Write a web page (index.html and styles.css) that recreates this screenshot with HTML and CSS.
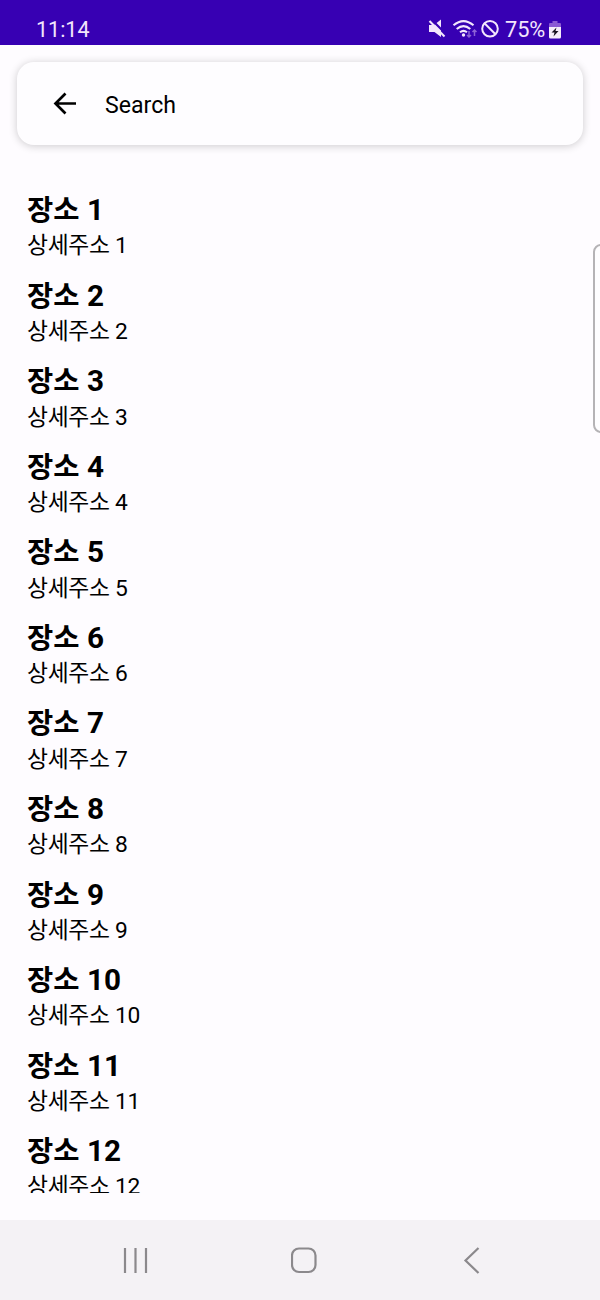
FILE: index.html
```html
<!DOCTYPE html>
<html lang="ko">
<head>
<meta charset="utf-8">
<title>Search</title>
<link rel="stylesheet" href="styles.css">
</head>
<body>
<div class="screen">
  <header class="status">
    <span class="time">11:14</span>
    <svg class="status-icons" viewBox="0 0 76 24" fill="none" stroke="#f3e6fc">
      <path d="M2 8h5l7-5.500v17.500L7.500 15H2z" fill="#f3e6fc" stroke="none"/>
      <path d="M4.500 2.500l15 15" stroke="#3700b3" stroke-width="2.200"/>
      <path d="M2.500 4l15 15.500" stroke-width="2"/>
      <path d="M26.500 8.300q10-8.500 20 0M29.700 12q6.800-5.800 13.600 0M33 15.300q3.500-2.800 7 0" stroke-width="2.100"/>
      <circle cx="36.500" cy="18" r="1.700" fill="#f3e6fc" stroke="none"/>
      <path d="M42 14v6m-2-2l2 2 2-2M47.500 19v-6m-2 2l2-2 2 2" stroke="#8c62d5" stroke-width="1.500"/>
      <circle cx="63" cy="11.700" r="7.800" stroke-width="2"/>
      <path d="M57.500 6.200l11 11" stroke-width="2"/>
    </svg>
    <span class="percent">75%</span>
    <svg class="battery" viewBox="0 0 12 18">
      <path d="M3.500 0h5v2H11q1 0 1 1v4H0V3q0-1 1-1h2.500z" fill="#8a58d4"/>
      <path d="M0 6h12v10q0 1.500-1.500 1.500h-9Q0 17.500 0 16z" fill="#f5ecfa"/>
      <path d="M7.500 6.500L2.500 11.500h3L4.500 15.500l5-5.500h-3z" fill="#17101f"/>
    </svg>
  </header>
  <div class="search">
    <svg class="back" viewBox="0 0 24 24" fill="none" stroke="#000" stroke-width="2.700"><path d="M23 11.500H2.500M12.500 1.500L2.500 11.500l10 10"/></svg>
    <span class="search-text">Search</span>
  </div>
  <ul class="places">
    <li class="place"><b class="name">장소 <span class="number">1</span></b><span class="address">상세주소 1</span></li>
    <li class="place"><b class="name">장소 <span class="number">2</span></b><span class="address">상세주소 2</span></li>
    <li class="place"><b class="name">장소 <span class="number">3</span></b><span class="address">상세주소 3</span></li>
    <li class="place"><b class="name">장소 <span class="number">4</span></b><span class="address">상세주소 4</span></li>
    <li class="place"><b class="name">장소 <span class="number">5</span></b><span class="address">상세주소 5</span></li>
    <li class="place"><b class="name">장소 <span class="number">6</span></b><span class="address">상세주소 6</span></li>
    <li class="place"><b class="name">장소 <span class="number">7</span></b><span class="address">상세주소 7</span></li>
    <li class="place"><b class="name">장소 <span class="number">8</span></b><span class="address">상세주소 8</span></li>
    <li class="place"><b class="name">장소 <span class="number">9</span></b><span class="address">상세주소 9</span></li>
    <li class="place"><b class="name">장소 <span class="number">10</span></b><span class="address">상세주소 10</span></li>
    <li class="place"><b class="name">장소 <span class="number">11</span></b><span class="address">상세주소 11</span></li>
    <li class="place"><b class="name">장소 <span class="number">12</span></b><span class="address">상세주소 12</span></li>
  </ul>
  <nav class="navbar">
    <svg class="nav-icon" viewBox="0 0 28 28"><path d="M3 2v25M13.500 2v25M24 2v25"/></svg>
    <svg class="nav-icon" viewBox="0 0 28 28"><rect x="1" y="2.500" width="23.500" height="23.500" rx="7"/></svg>
    <svg class="nav-icon" viewBox="0 0 28 28"><path d="M19.500 2L6.500 14.500l13 12.500"/></svg>
  </nav>
  <div class="edge-panel"></div>
</div>
</body>
</html>
```
FILE: styles.css
```css
body {
  margin: 0;
  font-family: Roboto, "Noto Sans CJK KR", sans-serif;
  color: #000;
}

.screen {
  position: relative;
  display: flex;
  flex-direction: column;
  width: 600px;
  height: 1300px;
  overflow: hidden;
  background: #fefcff;
}

.status {
  display: flex;
  align-items: flex-start;
  flex: none;
  box-sizing: border-box;
  height: 45px;
  padding: 17px 39px 0 36px;
  background: #3700b3;
  color: #f3e6fc;
  line-height: 26px;
}

.time {
  flex: 1;
  font-size: 21.5px;
}

.status-icons {
  width: 76px;
  height: 24px;
  margin-right: 2px;
}

.percent {
  width: 44px;
  font-size: 21.8px;
  letter-spacing: -0.1px;
}

.battery {
  width: 12px;
  height: 18px;
  margin-top: 4px;
}

.search {
  display: flex;
  align-items: center;
  flex: none;
  height: 83px;
  margin: 17px 17px 0;
  border-radius: 17px;
  background: #fefdff;
  box-shadow: 0 1px 9px rgba(0, 0, 0, 0.2);
}

.back {
  width: 24px;
  height: 24px;
  margin-left: 36px;
}

.search-text {
  margin-left: 28px;
  padding-top: 3px;
  font-size: 23.1px;
}

.places {
  flex: none;
  height: 1001px;
  margin: 47.4px 0 0;
  padding: 0 0 0 27px;
  overflow: hidden;
  list-style: none;
}

.place {
  display: flex;
  flex-direction: column;
  height: 85.53px;
}

.name {
  height: 37px;
  font-size: 28.5px;
  line-height: 37px;
}

.number {
  margin-left: 0.5px;
  font-size: 29.7px;
  line-height: 1;
}

.address {
  margin-top: 0.1px;
  font-size: 22.8px;
  line-height: 33px;
  letter-spacing: -0.3px;
}

.navbar {
  display: flex;
  justify-content: space-between;
  align-items: center;
  box-sizing: border-box;
  height: 80px;
  margin-top: auto;
  padding: 0 113px 0 122px;
  background: #f4f2f5;
}

.nav-icon {
  width: 28px;
  height: 28px;
  fill: none;
  stroke: #8b898c;
  stroke-width: 2.2;
}

/* Handle floating over the right edge of the list */
.edge-panel {
  position: absolute;
  top: 244px;
  right: -12px;
  box-sizing: border-box;
  width: 19px;
  height: 189px;
  border: 2px solid #b5b3b6;
  border-radius: 8px;
  background: #fefdff;
}
```
